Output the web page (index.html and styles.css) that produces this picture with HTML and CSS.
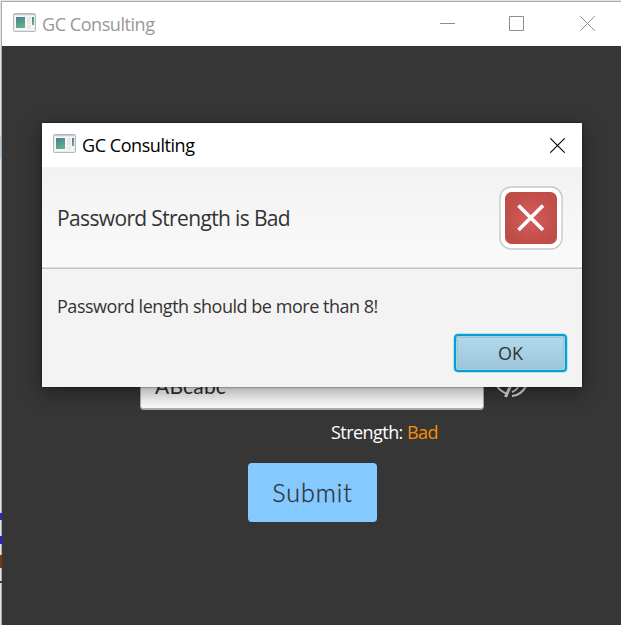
FILE: index.html
```html
<!DOCTYPE html>
<html lang="en">
<head>
<meta charset="utf-8">
<title>GC Consulting</title>
<link rel="stylesheet" href="styles.css">
</head>
<body>
<svg width="0" height="0" class="defs" aria-hidden="true">
  <defs>
    <linearGradient id="pane" x1="0" y1="0" x2="0.4" y2="1"><stop offset="0" stop-color="#477c9c"/><stop offset="1" stop-color="#61b184"/></linearGradient>
    <symbol id="app" viewBox="0 0 23 19">
      <rect x=".5" y=".5" width="22" height="18" rx="1" fill="#e9ebee" stroke="#b5b8bd"/>
      <path d="M1 1.5h21" stroke="#c3c8d1"/>
      <path d="M2 3h19v14H2z" fill="#f7f7f7"/>
      <path d="M3 4h9v11H3z" fill="url(#pane)"/>
      <path d="M14 4h4v7h-4zM14 12h4v4h-4z" fill="#e9e9e9"/>
      <path d="M19 4h2v8h-2z" fill="url(#pane)"/>
    </symbol>
  </defs>
</svg>
<main class="window">
  <header class="titlebar">
    <svg class="app-icon"><use href="#app"/></svg>
    <span class="title">GC Consulting</span>
    <div class="controls">
      <svg width="15" height="15"><path d="M0 7.500h15"/></svg>
      <svg width="15" height="15"><path d="M.5 .5h14v14H.5z"/></svg>
      <svg width="15" height="15"><path d="M.3 .3l14.4 14.4M14.7 .3L.3 14.7"/></svg>
    </div>
  </header>
  <section class="form">
    <div class="password-row">
      <div class="password">ABcabc</div>
      <svg class="eye" width="34" height="28" viewBox="0 0 34 28"><path d="M2.500 12.500Q17-5 32.500 12.500Q27 22.500 18 23M2.500 12.500Q6.500 18.500 12.500 20.500M17 14L25 2" fill="none" stroke="#dedede" stroke-width="2.200"/><path d="M11.500 24L16 14" stroke="#dedede" stroke-width="3"/><path d="M18 19Q23 17 24.500 13" fill="none" stroke="#dedede" stroke-width="2"/></svg>
    </div>
    <p class="strength"><span>Strength:</span> <span class="level">Bad</span></p>
    <button class="submit">Submit</button>
  </section>
</main>
<div class="dialog" role="dialog">
  <header class="dialog-title">
    <svg class="app-icon"><use href="#app"/></svg>
    <span class="title">GC Consulting</span>
    <svg class="close" width="15" height="15"><path d="M.3 .3l14.4 14.4M14.700 .3L.3 14.700"/></svg>
  </header>
  <div class="dialog-head">
    <h1>Password Strength is Bad</h1>
    <svg width="64" height="64" viewBox="0 0 64 64">
      <defs><radialGradient id="red"><stop stop-color="#d75d5d"/><stop offset="1" stop-color="#bf4d48"/></radialGradient></defs>
      <rect x="1" y="1" width="62" height="62" rx="11" fill="#fff" stroke="#c8c8c8" stroke-width="1.400"/>
      <rect x="6" y="6" width="52" height="52" rx="6.500" fill="url(#red)"/>
      <path d="M19.500 19.500l24.500 24.500M44 19.500L19.500 44" stroke="#fff" stroke-width="3.600"/>
    </svg>
  </div>
  <div class="dialog-body">
    <p>Password length should be more than 8!</p>
    <button class="ok">OK</button>
  </div>
</div>
</body>
</html>
```
FILE: styles.css
```css
* { box-sizing: border-box; }
html, body { height: 100%; margin: 0; overflow: hidden; }
body {
  padding: 1px 0 0 1px;
  font-family: "Open Sans", "Noto Sans", sans-serif;
  font-weight: 400;
  background:
    linear-gradient(#b5cee2, #b5cee2) 0 136px / 1px 23px no-repeat,
    linear-gradient(#2428d8, #2428d8) 0 513px / 2px 7px no-repeat,
    linear-gradient(#2020e8, #2020e8) 0 536px / 2px 8px no-repeat,
    linear-gradient(#803808, #803808) 0 555px / 2px 13px no-repeat,
    linear-gradient(#702060, #702060) 0 581px / 2px 2px no-repeat,
    #e4e4e4;
}
.defs { position: absolute; }
.window {
  height: 624px;
  border: solid rgba(60, 60, 60, .35);
  border-width: 1px 0 0 1px;
  background: #363636 padding-box;
}
.titlebar {
  height: 44px;
  display: flex;
  align-items: center;
  padding: 0 26px 0 11px;
  background: #fff;
  color: #989898;
}
.app-icon { width: 23px; height: 19px; margin-right: 6px; margin-bottom: 3px; flex: none; }
.title { font-size: 18px; line-height: 24px; letter-spacing: -.44px; white-space: nowrap; }
.controls { display: flex; gap: 55px; margin: 0 0 1px auto; }
.controls svg, .close { fill: none; stroke: #8e8e8e; stroke-width: 1; }
.controls svg:nth-child(2) { margin-left: -1px; }
.controls svg:nth-child(3) { margin-left: 1px; }
.form { display: flex; flex-direction: column; align-items: flex-start; padding: 319px 0 0 138px; }
.password-row { display: flex; align-items: flex-start; gap: 10px; height: 45px; }
.password {
  width: 344px;
  height: 45px;
  padding: 7px 14px;
  border: 1px solid #b0b0b0;
  border-bottom-width: 2px;
  border-radius: 4px;
  background: #fff;
  color: #2f2f2f;
  font: 21px/26px Lato, sans-serif;
  letter-spacing: .2px;
}
.eye { margin-top: 8px; }
.strength { margin: 10px 0 0 191px; font-size: 18px; line-height: 24px; letter-spacing: -.55px; color: #fff; white-space: nowrap; }
.level { color: #ff8c05; }
button { font-family: inherit; font-weight: inherit; padding: 0; }
.submit {
  width: 129px;
  height: 58.5px;
  margin: 19px 0 0 108px;
  border: 0;
  border-radius: 4px;
  background: #84c9ff;
  color: #2f2f2f;
  font: 300 25px Lato, sans-serif;
  letter-spacing: .9px;
  -webkit-text-stroke: .3px #2f2f2f;
}
.dialog {
  position: absolute;
  left: 42px;
  top: 123px;
  width: 540px;
  height: 264px;
  display: flex;
  flex-direction: column;
  background: #f3f3f3;
  box-shadow: 0 0 2px rgba(0,0,0,.65), 0 6px 20px rgba(0,0,0,.4);
}
.dialog-title { height: 44px; display: flex; align-items: center; padding: 0 17px 0 11px; background: #fff; color: #000; }
.close { margin-left: auto; stroke: #000; stroke-width: 1.1; }
.dialog-head {
  height: 102px;
  display: flex;
  align-items: center;
  justify-content: space-between;
  padding: 0 19px 0 15px;
  border-bottom: 1px solid #c4c4c4;
  box-shadow: inset 0 -1px #dedede;
  background: linear-gradient(#f2f2f2, #fafafa);
}
h1 { margin: 0; font-size: 21px; font-weight: inherit; line-height: 28px; letter-spacing: -.64px; color: #333; }
.dialog-body { display: flex; flex-direction: column; padding: 25px 15px 0; color: #333; }
.dialog-body p { margin: 0; font-size: 18px; line-height: 24px; letter-spacing: -.47px; white-space: nowrap; }
.ok {
  align-self: flex-end;
  width: 113px;
  height: 38px;
  margin-top: 16px;
  border: 2px solid #059fd5;
  border-radius: 4px;
  background: linear-gradient(#b2dced, #9bc4d8);
  box-shadow: 0 0 0 1px #bae3f0, inset 0 0 0 1px #a4d2e5, inset 0 0 0 2px #98c5d7;
  color: #333;
  font-size: 18px;
}
```
